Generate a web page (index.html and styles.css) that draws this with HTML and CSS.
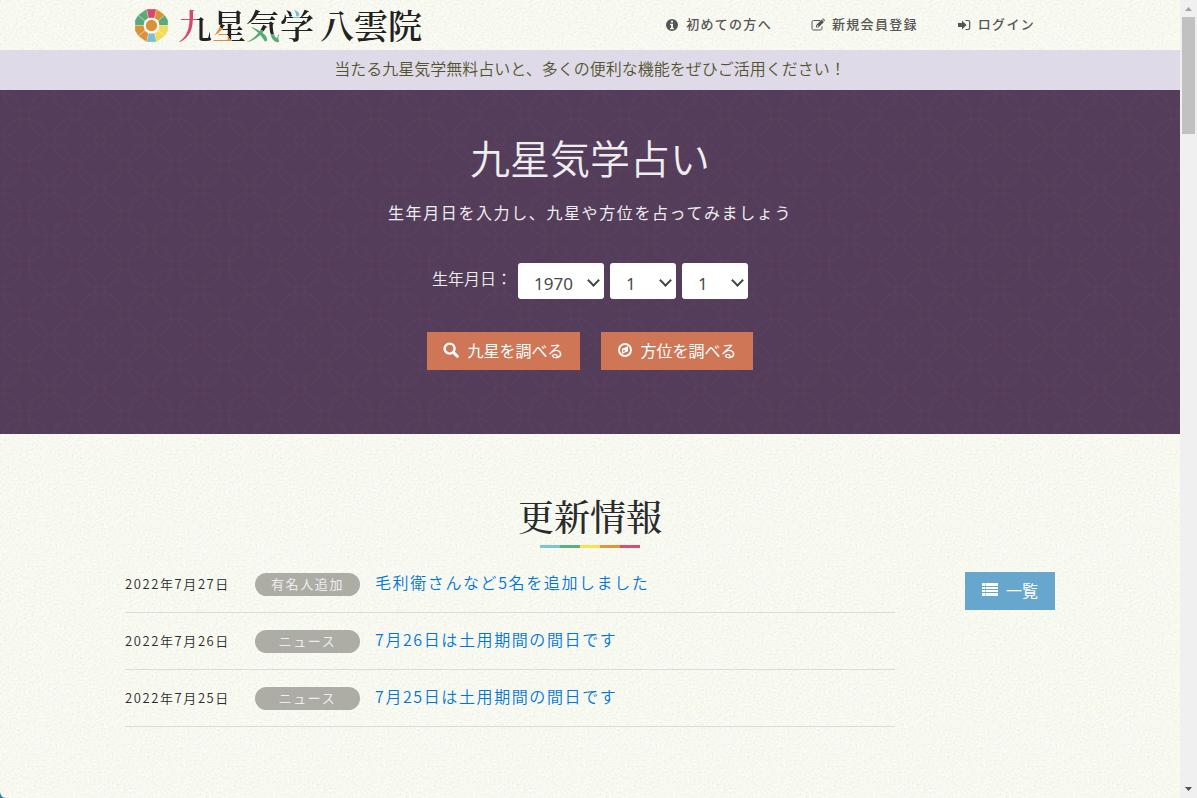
FILE: index.html
```html
<!DOCTYPE html>
<html lang="ja">
<head>
<meta charset="utf-8">
<meta name="viewport" content="width=device-width, initial-scale=1">
<title>九星気学 八雲院</title>
<link rel="stylesheet" href="styles.css">
</head>
<body>
<div class="page">
  <header class="header">
    <a class="logo" href="#">
      <svg class="logo-mark" viewBox="-17 -17 34 34" aria-hidden="true">
        <g stroke="#fbfaf2" stroke-width="0.3">
          <path fill="#d44a6c" d="M-4.9-16H4.900L3-7H-3Z"/>
          <path fill="#db9138" d="M4.900-16L12.900-10.200L6.500-4.500L3-7Z"/>
          <path fill="#5ba878" d="M12.900-10.200L16-5V0H7.500L6.500-4.500Z"/>
          <path fill="#f0dc55" d="M16 0V5L12.900 10.200L6.500 5L7.500 0Z"/>
          <path fill="#f0dc55" d="M12.900 10.200L4.900 16L3 7.500L6.500 5Z"/>
          <path fill="#7bbfd0" d="M4.900 16H-4.900L-3 7.500H3Z"/>
          <path fill="#db9138" d="M-4.900 16L-12.900 10.200L-6.500 5L-3 7.500Z"/>
          <path fill="#db9138" d="M-12.900 10.200L-16 5V0H-7.500L-6.500 5Z"/>
          <path fill="#5ba878" d="M-16 0V-5L-12.900-10.200L-6.500-4.500L-7.500 0Z"/>
          <path fill="#5ba878" d="M-12.900-10.200L-4.900-16L-3-7L-6.500-4.500Z"/>
        </g>
        <circle r="7.500" fill="#fbfaf2"/><circle r="5.500" fill="#db9138"/>
      </svg>
      <span class="logo-name"><span><span class="ink ink-pink">九</span><span class="ink ink-orange">星</span><span class="ink ink-green">気</span><span class="ink ink-blue">学</span></span><span>八雲院</span></span>
    </a>
    <nav class="nav">
      <a href="#"><svg class="nav-icon" viewBox="0 0 14 14" aria-hidden="true"><path fill="currentColor" fill-rule="evenodd" d="M7 1a6 6 0 1 0 0 12A6 6 0 0 0 7 1ZM6 2.800h2v1.800H6ZM5 5.700h3V10h1v1.300H5V10h1V7H5Z"/></svg>初めての方へ</a>
      <a href="#"><svg class="nav-icon" viewBox="0 0 14 14" aria-hidden="true"><path fill="none" stroke="currentColor" d="M9 2.500H2.600A1.600 1.600 0 0 0 1 4.100v6.300A1.600 1.600 0 0 0 2.600 12h6.800A1.600 1.600 0 0 0 11 10.400V8.500"/><path fill="currentColor" fill-rule="evenodd" d="M5 7.200L10.600 1.600L13 4L7.400 9.600H5ZM5.900 7.700V8.800H7L7.500 8.200L6.400 7.100Z"/><path fill="currentColor" d="M11.200 1L12 .3L14 2.300L13.500 3.300Z"/></svg>新規会員登録</a>
      <a href="#"><svg class="nav-icon" viewBox="0 0 14 14" aria-hidden="true"><path fill="currentColor" d="M1 5h4V2.500L9.600 7L5 11.500V9H1Z"/><path fill="none" stroke="currentColor" stroke-width="1.200" d="M8.500 2.500H11A1.700 1.700 0 0 1 12.700 4.200V9.800A1.700 1.700 0 0 1 11 11.500H8.500"/></svg>ログイン</a>
    </nav>
  </header>

  <p class="banner">当たる九星気学無料占いと、多くの便利な機能をぜひご活用ください！</p>

  <section class="hero">
    <h1 class="hero-title">九星気学占い</h1>
    <p class="hero-lead">生年月日を入力し、九星や方位を占ってみましょう</p>
    <form class="form">
      <div class="fields">
        <label for="year">生年月日：</label>
        <span class="select-wrap select-year"><select id="year"><option>1970</option></select></span>
        <span class="select-wrap"><select aria-label="月"><option>1</option></select></span>
        <span class="select-wrap"><select aria-label="日"><option>1</option></select></span>
      </div>
      <div class="actions">
        <button class="btn" type="button"><svg viewBox="0 0 16 16" aria-hidden="true"><circle cx="6.600" cy="6.600" r="5" fill="none" stroke="currentColor" stroke-width="2.400"/><path d="M10.500 10.500L14.300 14.300" stroke="currentColor" stroke-width="3" stroke-linecap="round"/></svg>九星を調べる</button>
        <button class="btn" type="button"><svg viewBox="0 0 16 16" aria-hidden="true"><circle cx="8" cy="8" r="6" fill="none" stroke="currentColor" stroke-width="2"/><path fill="currentColor" fill-rule="evenodd" d="M11 4.200V9.300L5 11.800V6.700ZM6.200 7.500V10L8.800 8.700Z"/></svg>方位を調べる</button>
      </div>
    </form>
  </section>

  <main class="news">
    <h2 class="news-title">更新情報</h2>
    <div class="news-body">
      <ul class="news-list">
        <li><time datetime="2022-07-27">2022年7月27日</time><span class="tag">有名人追加</span><a href="#">毛利衛さんなど5名を追加しました</a></li>
        <li><time datetime="2022-07-26">2022年7月26日</time><span class="tag">ニュース</span><a href="#">7月26日は土用期間の間日です</a></li>
        <li><time datetime="2022-07-25">2022年7月25日</time><span class="tag">ニュース</span><a href="#">7月25日は土用期間の間日です</a></li>
      </ul>
      <a class="btn btn-list" href="#"><svg viewBox="0 0 16 16" aria-hidden="true"><path fill="currentColor" d="M0 1h3v3H0ZM3.500 1H16v3H3.500ZM0 5h3v2H0ZM3.500 5H16v2H3.500ZM0 8h3v2H0ZM3.500 8H16v2H3.500ZM0 11h3v3H0ZM3.500 11H16v3H3.500Z"/></svg>一覧</a>
    </div>
  </main>
</div>
<div class="scrollbar" aria-hidden="true">
  <svg viewBox="0 0 17 17"><path fill="#a3a3a3" d="M5 11L8.500 7L12 11Z"/></svg>
  <span class="thumb"></span>
  <svg viewBox="0 0 17 17"><path fill="#505050" d="M5 6L8.500 10L12 6Z"/></svg>
</div>
</body>
</html>
```
FILE: styles.css
```css
* { box-sizing: border-box; }

html { background: #2a7fa5; }

body {
  margin: 0;
  min-height: 100vh;
  display: grid;
  grid-template-columns: 1fr 17px;
  font-family: "Noto Sans CJK JP", sans-serif;
  font-size: 16px;
  font-weight: 350;
  color: #292b2c;
}

h1, h2, p, ul { margin: 0; padding: 0; }
a { color: #0275d8; text-decoration: none; }

.page {
  display: flex;
  flex-direction: column;
  border-bottom-left-radius: 6px;
  background-color: #fcfbf3;
  /* paper grain */
  background-image: url("data:image/svg+xml,%3Csvg xmlns='http://www.w3.org/2000/svg' width='200' height='200'%3E%3Cfilter id='n' x='0' y='0' width='100%25' height='100%25' color-interpolation-filters='sRGB'%3E%3CfeTurbulence type='fractalNoise' baseFrequency='.5' numOctaves='3' stitchTiles='stitch'/%3E%3CfeColorMatrix values='.5 0 0 0 .7 0 .4 0 0 .76 0 0 .5 0 .67 0 0 0 0 .4'/%3E%3C/filter%3E%3Crect width='200' height='200' filter='url(%23n)'/%3E%3C/svg%3E");
}

.header {
  width: 100%;
  max-width: 930px;
  height: 50px;
  margin: 0 auto;
  padding: 0 0 0 9px;
  display: flex;
  align-items: center;
  justify-content: space-between;
}

.logo { display: flex; align-items: center; gap: 9px; color: #222; }
.logo-mark { width: 35px; height: 35px; }
.logo-name {
  display: flex;
  gap: 6px;
  font-family: "Noto Serif CJK JP", "Noto Serif JP", "Noto Sans CJK JP", serif;
  font-size: 34px;
  font-weight: 600;
  line-height: 48px;
  white-space: nowrap;
}
.ink { color: transparent; -webkit-background-clip: text; background-clip: text; }
.ink-pink { background-image: linear-gradient(100deg, #d44a6c 52%, #222 52%); }
.ink-orange { background-image: linear-gradient(50deg, #e08a3c 36%, #222 36%); }
.ink-green { background-image: linear-gradient(20deg, #5ba878 40%, #222 40%); }
.ink-blue { background-image: radial-gradient(circle at 48% 28%, #7bbfd0 5px, #222 5px); }

.nav { display: flex; }
.nav a {
  display: flex;
  align-items: center;
  gap: 7px;
  padding: 0 20px 2px 19px;
  color: #555;
  font-size: 13px;
  font-weight: 500;
  letter-spacing: 0.1em;
  line-height: 46px;
  white-space: nowrap;
}
.nav a:last-child { padding-right: 20px; }
.nav-icon { width: 14px; height: 14px; margin-top: 2px; }

.banner {
  background: #dfdae8;
  color: #54532f;
  text-align: center;
  line-height: 24px;
  padding: 6px 0 10px;
}

.hero {
  padding: 38px 16px 64px;
  text-align: center;
  color: #eee;
  background-color: #543d5a;
  /* interlocking petals, nodes every 50px */
  background-image: url("data:image/svg+xml,%3Csvg xmlns='http://www.w3.org/2000/svg' width='50' height='50'%3E%3Cg fill='none' stroke='%23593f5c' stroke-width='1.500'%3E%3Ccircle cx='25' cy='25' r='5'/%3E%3Ccircle r='5'/%3E%3Ccircle cx='50' r='5'/%3E%3Ccircle cy='50' r='5'/%3E%3Ccircle cx='50' cy='50' r='5'/%3E%3Cpath d='M3 3Q17 4 22 22Q4 17 3 3M28 28Q46 33 47 47Q33 46 28 28M47 3Q46 17 28 22Q33 4 47 3M22 28Q17 46 3 47Q4 33 22 28'/%3E%3C/g%3E%3C/svg%3E");
}
.hero-title { font-size: 40px; font-weight: 350; line-height: 58px; }
.hero-lead { margin-top: 14px; font-weight: 400; line-height: 24px; letter-spacing: 0.1em; }

.fields {
  margin-top: 39px;
  display: flex;
  justify-content: center;
  align-items: center;
  gap: 6px;
}
.fields label { line-height: 30px; padding-bottom: 6px; }
.select-wrap { position: relative; width: 66px; }
.select-year { width: 86px; }
.select-wrap::after {
  content: "";
  position: absolute;
  right: 6px;
  top: 13px;
  width: 7px;
  height: 7px;
  border: solid #444;
  border-width: 0 2px 2px 0;
  transform: rotate(45deg);
  pointer-events: none;
}
.select-wrap select {
  display: block;
  appearance: none;
  width: 100%;
  height: 36px;
  padding: 4px 0 0 16px;
  border: 0;
  border-radius: 3px;
  background: #fff;
  color: #464a4c;
  font: 400 17px "Noto Sans", sans-serif;
}

.actions {
  margin-top: 33px;
  display: flex;
  justify-content: center;
  gap: 21px;
}
.btn {
  display: inline-flex;
  align-items: center;
  gap: 8px;
  height: 38px;
  padding: 0 16px 2px;
  border: 0;
  background: #ce7656;
  color: #fff;
  font: inherit;
  font-weight: 400;
  white-space: nowrap;
}
.btn svg { width: 16px; height: 16px; }

.news {
  width: 100%;
  max-width: 930px;
  margin: 0 auto;
  padding: 54px 0;
}
.news-title {
  display: flex;
  flex-direction: column;
  align-items: center;
  gap: 2px;
  font-family: "Noto Serif CJK JP", "Noto Serif JP", "Noto Sans CJK JP", serif;
  font-size: 36px;
  font-weight: 500;
  line-height: 55px;
}
.news-title::after {
  content: "";
  width: 100px;
  height: 3px;
  background: linear-gradient(90deg, #7fc4d6 20%, #5fae80 20% 40%, #fbe14e 40% 60%, #e3953b 60% 80%, #dc4e6e 80%);
}
.news-body {
  margin-top: 8px;
  display: flex;
  justify-content: space-between;
  align-items: flex-start;
}
.news-list { flex: 0 1 770px; list-style: none; }
.news-list li {
  display: grid;
  grid-template-columns: 130px 105px 1fr;
  align-items: center;
  height: 57px;
  border-bottom: 1px solid #dcdbd4;
  letter-spacing: 0.1em;
}
.news-list time { font-size: 13px; padding-bottom: 1px; }
.news-list a { padding: 0 0 4px 15px; }
.tag {
  height: 23px;
  border-radius: 12px;
  background: #adada6;
  color: #eee;
  font-size: 13px;
  font-weight: 400;
  line-height: 22px;
  text-align: center;
}
.btn-list { margin-top: 16px; padding: 0 17px 2px; background: #68a7cd; }

.scrollbar {
  display: flex;
  flex-direction: column;
  background: #f0f0f0;
}
.scrollbar svg { width: 17px; height: 17px; }
.scrollbar svg:last-child { margin-top: auto; }
.thumb { height: 117px; margin: 0 2px; background: #c1c1c1; }
```
